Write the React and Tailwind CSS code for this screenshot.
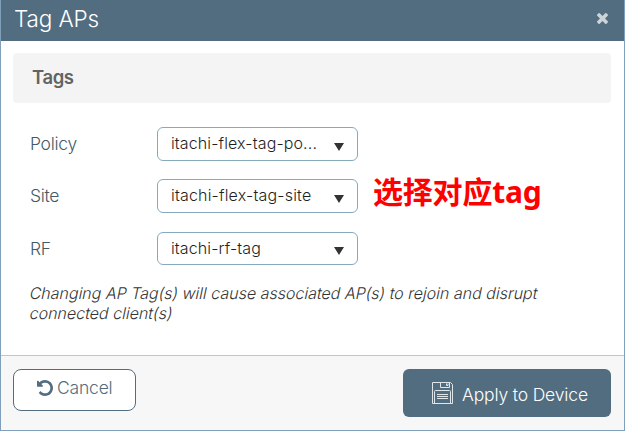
import React from "react";

function CloseIcon() {
  return (
    <svg className="block h-[11px] w-[11px]" viewBox="302 366 1188 1188" fill="#ccd4da">
      <path d="M1490 1322q0 40-28 68l-136 136q-28 28-68 28t-68-28l-294-294-294 294q-28 28-68 28t-68-28l-136-136q-28-28-28-68t28-68l294-294-294-294q-28-28-28-68t28-68l136-136q28-28 68-28t68 28l294 294 294-294q28-28 68-28t68 28l136 136q28 28 28 68t-28 68l-294 294 294 294q28 28 28 68z" />
    </svg>
  );
}

function UndoIcon() {
  return (
    <svg className="block h-4 w-4" viewBox="128 128 1536 1536" fill="#526d80">
      <path d="M1664 896q0 156-61 298t-164 245-245 164-298 61q-172 0-327-72.5t-264-204.5q-7-10-6.5-22.5t8.5-20.5l137-138q10-9 25-9 16 2 23 12 73 95 179 147t225 52q104 0 198.5-40.5t163.5-109.5 109.5-163.5 40.5-198.5-40.5-198.5-109.5-163.5-163.5-109.5-198.5-40.5q-98 0-188 35.5t-160 101.5l137 138q31 30 14 69-17 40-59 40h-448q-26 0-45-19t-19-45v-448q0-42 40-59 39-17 69 14l130 129q107-101 244.5-156.5t284.5-55.5q156 0 298 61t245 164 164 245 61 298z" />
    </svg>
  );
}

function SaveIcon() {
  return (
    <svg className="block h-[23px] w-[22px]" viewBox="0 0 22 23" fill="none" stroke="#dfe6ea" strokeWidth="1">
      <path d="M.5 .5H18.5L20.5 2.5V21.5H.5Z" />
      <path d="M8.5 .5V5.5H17.5V.5M14.5 1.5V3.5H16V1.5" />
      <path d="M2.5 21.5V9.5Q2.5 8.5 3.5 8.5H17.5Q18.5 8.5 18.5 9.5V21.5" />
      <path d="M5 12.5H16M5 14.5H16M5 16.5H16" />
    </svg>
  );
}

function TagField({ label, value, spacing, height, boxHeight }) {
  return (
    <div className={`flex ${height}`}>
      <div className="w-[127px] pt-[5px] text-[17.5px] leading-6 font-light tracking-[-0.3px] text-[#435b68]">{label}</div>
      <div className={`flex w-[201px] items-center rounded-md border border-[#86aabd] bg-white pr-[13px] pl-[13px] ${boxHeight}`}>
        <span className={`grow pb-[2px] text-[16px] leading-5 font-light whitespace-nowrap text-[#1f1f1f] ${spacing}`}>{value}</span>
        <svg className="mt-[5px] block h-2 w-[10px] shrink-0" viewBox="0 0 10 8" fill="#333">
          <path d="M0 0H10L5 8Z" />
        </svg>
      </div>
    </div>
  );
}

export default function App() {
  return (
    <div className="flex h-[431px] w-[625px] flex-col overflow-hidden border border-t-0 border-[#809fba] bg-white font-['Inter','Noto_Sans_CJK_SC',sans-serif]">
      <header className="-mx-px flex h-[41px] shrink-0 items-center justify-between bg-[#526d80] pr-[17px] pl-[14px]">
        <h1 className="pb-[3px] text-[22.5px] leading-7 font-light tracking-[-0.1px] text-white">Tag APs</h1>
        <button className="pb-[4px]" aria-label="Close"><CloseIcon /></button>
      </header>

      <main className="flex h-[314px] shrink-0 flex-col pt-3 pr-3 pl-3">
        <h2 className="h-[50px] w-[598px] rounded bg-[#f4f4f4] pt-3 pl-[19px] text-[18.5px] leading-6 font-semibold tracking-[-0.4px] text-[#636363]">Tags</h2>
        <div className="flex pt-6 pl-[17px]">
          <div>
            <TagField label="Policy" value="itachi-flex-tag-po..." spacing="tracking-[0.12px]" height="h-[52px]" boxHeight="h-[34px]" />
            <TagField label="Site" value="itachi-flex-tag-site" spacing="tracking-[0.18px]" height="h-[53px]" boxHeight="h-[34px]" />
            <TagField label="RF" value="itachi-rf-tag" spacing="tracking-[0.12px]" height="h-[34px]" boxHeight="h-[33px]" />
          </div>
          <div className="pt-[45px] pl-[15px] font-['Noto_Sans','Noto_Sans_CJK_SC',sans-serif] text-[30px] leading-10 font-bold tracking-[-0.2px] whitespace-nowrap text-[#ff0000]">选择对应tag</div>
        </div>
        <p className="w-[550px] pt-[17px] pl-[17px] text-[16px] leading-5 font-light text-[#333]">
          <span className="block -skew-x-12 whitespace-nowrap">Changing AP Tag(s) will cause associated AP(s) to rejoin and disrupt</span>
          <span className="block -skew-x-12">connected client(s)</span>
        </p>
      </main>

      <footer className="flex grow items-start justify-between border-t border-[#bfc6c7] bg-[#f7f7f7] pt-[13px] pr-[13px] pl-3">
        <button className="flex h-[42px] w-[123px] rounded-lg border border-[#526d80] bg-white pl-[23px]">
          <span className="pt-[10px]"><UndoIcon /></span>
          <span className="pt-[6px] pl-[4px] text-[17.5px] leading-6 font-light tracking-[-0.2px] text-[#526d80]">Cancel</span>
        </button>
        <button className="flex h-12 w-[208px] rounded-md bg-[#526d80] pl-[29px]">
          <span className="pt-[13px]"><SaveIcon /></span>
          <span className="pt-[14px] pl-[8px] text-[17.5px] leading-6 font-light tracking-[-0.15px] whitespace-nowrap text-white">Apply to Device</span>
        </button>
      </footer>
    </div>
  );
}
